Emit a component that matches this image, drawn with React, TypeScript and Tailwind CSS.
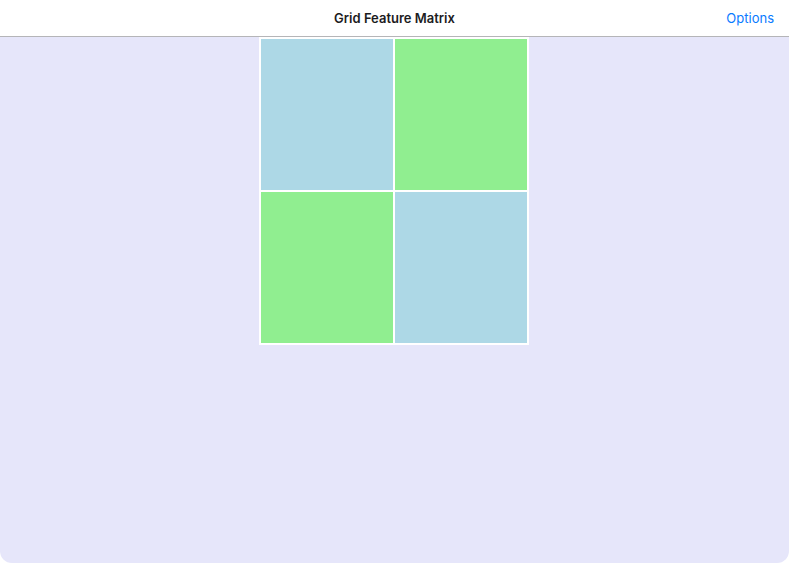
export default function App() {
  const cells = ["bg-[#add8e6]", "bg-[#90ee90]", "bg-[#90ee90]", "bg-[#add8e6]"];
  return (
    <div className="w-[789px] h-[563px] bg-white" style={{ fontFamily: "Inter, 'Noto Sans', sans-serif" }}>
      <div className="w-full h-full flex flex-col rounded-b-[12px] overflow-hidden">
        <div className="h-[37px] shrink-0 bg-white border-b border-[#b5b5b8] flex items-center relative pt-[2px]">
          <div className="flex-1 text-center text-[13px] font-semibold text-[#1c1c1e]">Grid Feature Matrix</div>
          <div className="absolute right-[15px] top-0 h-full pt-[2px] flex items-center text-[13px] text-[#0a7aff]">Options</div>
        </div>
        <div className="flex-1 bg-[#e6e6fa] flex justify-center pr-[1px]">
          <div className="w-[270px] h-[308px] bg-white p-[2px] grid grid-cols-2 grid-rows-2 gap-[2px]">
            {cells.map((c, i) => (
              <div key={i} className={c} />
            ))}
          </div>
        </div>
      </div>
    </div>
  );
}
